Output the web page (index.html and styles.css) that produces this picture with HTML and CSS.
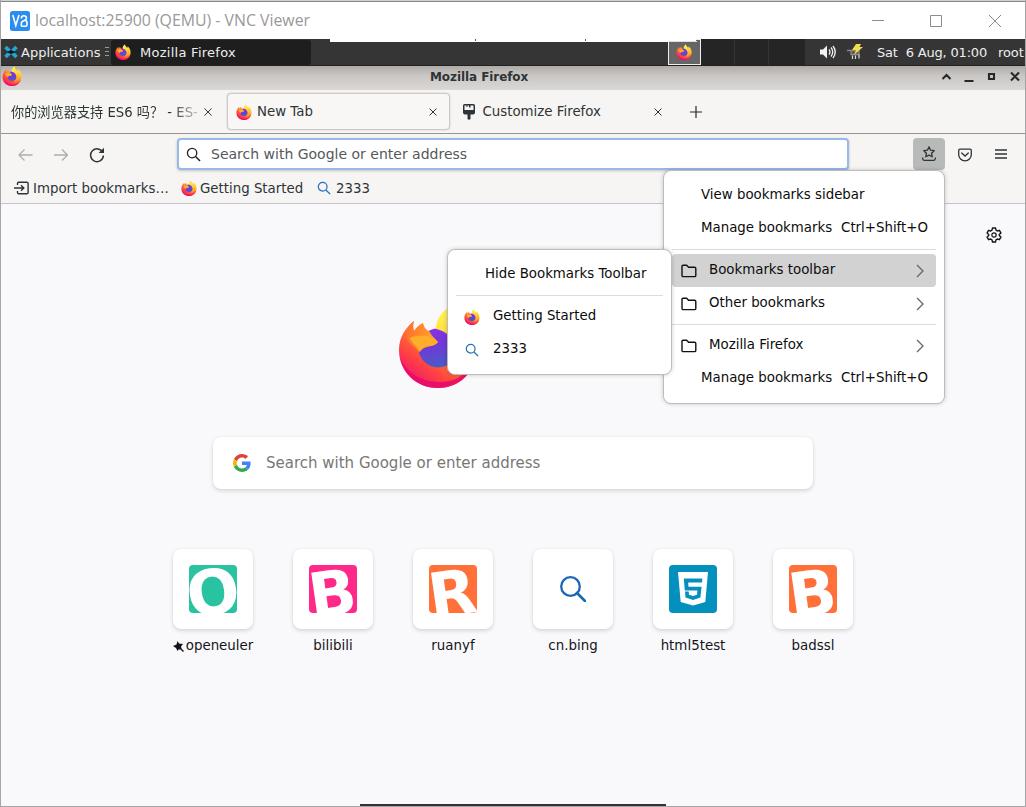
FILE: index.html
```html
<!DOCTYPE html>
<html lang="en">
<head>
<meta charset="utf-8">
<title>VNC Viewer</title>
<link rel="stylesheet" href="styles.css">
</head>
<body>
<svg class="defs" width="0" height="0">
  <defs>
    <linearGradient id="fx-body" x1=".85" y1=".1" x2=".25" y2=".95"><stop offset="0" stop-color="#fff44f"/><stop offset=".3" stop-color="#ffb72e"/><stop offset=".52" stop-color="#ff7a2c"/><stop offset=".8" stop-color="#ff3d46"/><stop offset="1" stop-color="#f01a6a"/></linearGradient>
    <linearGradient id="fx-globe" x1=".3" y1="0" x2=".5" y2="1"><stop offset="0" stop-color="#8a2fe0"/><stop offset=".45" stop-color="#6f3ad8"/><stop offset="1" stop-color="#4a5bc4"/></linearGradient>
    <linearGradient id="fx-head" x1="0" y1=".3" x2="1" y2=".5"><stop offset="0" stop-color="#ff6f2e"/><stop offset="1" stop-color="#ffab2a"/></linearGradient>
    <linearGradient id="fx-flame" x1=".3" y1="0" x2=".6" y2="1"><stop offset="0" stop-color="#fff44f"/><stop offset=".5" stop-color="#ffd43a"/><stop offset="1" stop-color="#ff9a30"/></linearGradient>
  </defs>
  <symbol id="firefox" viewBox="0 0 80 82">
    <path fill="url(#fx-body)" d="M16 15C15 19 15 22 16 25C19 22 22 19 25 17C25 20 26 22 28 25L39 25C39 15 43 7 50 2C50 10 57 15 62 20C64 18 63 13 62 11C72 17 79 30 79 43C79 65 62 82 40 82C18 82 1 66 1 44C1 31 8 21 16 15Z"/>
    <path fill="#e6086c" d="M2 51C9 68 24 76 42 76C60 76 71 66 77 53C73 70 59 82 40 82C21 82 6 69 2 51Z" opacity=".85"/>
    <circle cx="40" cy="42" r="19.500" fill="url(#fx-globe)"/>
    <path fill="url(#fx-flame)" d="M38 23C38 14 43 7 50 2C50 11 59 16 64 24C74 39 69 62 48 65C60 57 62 45 55 35C51 28 46 25 38 23Z"/>
    <path fill="url(#fx-head)" d="M8 27Q11 18 16 15Q14 20 16 25Q20 19 25 17Q26 23 32 26C34 31 38 33 40 36C37 40 33 40 29 41C25 42 22 45 21 46C18 40 8 38 8 27Z"/>
    <path fill="#ffae2c" d="M12 32C18 29 25 30 30 30C33 33 38 34 40 36C37 40 32 39 28 40C25 41 23 43 22 46C20 40 14 38 12 32Z"/>
  </symbol>
  <symbol id="close" viewBox="0 0 8 8"><path d="M.5.5l7 7m0-7l-7 7" fill="none" stroke="#2e3436" stroke-width="1"/></symbol>
  <symbol id="search" viewBox="0 0 16 16"><circle cx="6.500" cy="6.500" r="5" fill="none" stroke="currentColor" stroke-width="1.400"/><path d="M10.200 10.200L15 15" stroke="currentColor" stroke-width="1.600"/></symbol>
  <symbol id="folder" viewBox="0 0 16 14"><path d="M2.200 1.200H5.600L7.600 3.200H13.600Q14.800 3.200 14.800 4.400V11.400Q14.800 12.600 13.600 12.600H2.200Q1 12.600 1 11.400V2.400Q1 1.200 2.200 1.200Z" fill="none" stroke="#111" stroke-width="1.400"/></symbol>
  <symbol id="chevron" viewBox="0 0 8 14"><path d="M1 1l6 6-6 6" fill="none" stroke="#666" stroke-width="1.300"/></symbol>
</svg>

<div class="screen">
  <div class="behind"></div>
  <div class="vnc-title">
    <svg class="vnc-logo" viewBox="0 0 20 20"><rect width="20" height="20" rx="2.500" fill="#2a8df2"/><path d="M2.800 4l3 10.500L9 4M11.300 7.500q0-2.800 2.500-2.800t2.700 2.300q0 1.700-2.200 2.600-3 .8-3 3v1.600q0 1 .8 1h3.600q1.300 0 1.300-1.500v-2.200q0-1.800-1.700-1.800" fill="none" stroke="#fff" stroke-width="1.600"/></svg>
    <span class="vnc-name">localhost:25900 (QEMU) - VNC Viewer</span>
    <svg class="vnc-buttons" viewBox="0 0 132 14"><path d="M0 6.500h12M58.500 1.500h11v11h-11zM117 1l12 12m0-12l-12 12" fill="none" stroke="#8c8c8c" stroke-width="1"/></svg>
  </div>

  <div class="panel">
    <svg class="xfce" viewBox="0 0 14 14"><path d="M1.500 2l4 4M12.500 2l-4 4M1.500 12l4-4M12.500 12l-4-4" stroke="#1fa9d6" stroke-width="3.600"/><path d="M2.500 7q4.500-3 9 0q-4.500 3-9 0z" fill="#07161d"/></svg>
    <span class="apps">Applications</span>
    <svg class="grip" viewBox="0 0 4 10"><path d="M0 .5h4M0 4.500h4M0 8.500h4" stroke="#999"/></svg>
    <div class="task"><svg class="i16"><use href="#firefox"/></svg><span>Mozilla Firefox</span></div>
    <div class="pager"><div class="desk active"><svg class="i16"><use href="#firefox"/></svg></div><div class="desk"></div><div class="desk"></div><div class="desk"></div></div>
    <svg class="volume" viewBox="0 0 16 14"><path d="M0 4.500h3L7 .5v13L3 9.500H0z" fill="#f2f2f2"/><path d="M9 4.500q2 2.500 0 5M11 2.500q3.500 4.500 0 9M13 1q4.500 6 0 12" fill="none" stroke="#f2f2f2" stroke-width="1.300"/></svg>
    <svg class="power" viewBox="0 0 16 16"><path d="M0 6.500h12v4H4V7" fill="#555" stroke="#8b8b8b" stroke-width="1.300"/><path d="M5.500 11.500v3.500M8.500 11.500v3.500M12 10.500v4" stroke="#ddd" stroke-width="1.200"/><path d="M9 0H14l-1.500 3h3.500L7 11l2-5H5z" fill="#f4dd4d"/></svg>
    <span class="clock">Sat&nbsp; 6 Aug, 01:00</span><span class="user">root</span>
    <div class="flyout"><i></i><i></i><i></i></div>
  </div>

  <div class="fx-title"><svg class="i20"><use href="#firefox"/></svg><b>Mozilla Firefox</b>
    <svg class="wm" viewBox="0 0 80 12"><path d="M1.500 8l4-4 4 4M23.500 10h9M48 3h5v5h-5zM70 1.500l8 8m0-8l-8 8" fill="none" stroke="#26292a" stroke-width="2.100"/></svg>
  </div>

  <div class="tabs">
    <div class="tab first"><span class="fade"><span class="cjk">你的浏览器支持</span> ES6 <span class="cjk">吗？</span> - ES-</span><svg class="x"><use href="#close"/></svg></div>
    <div class="tab current"><svg class="i16"><use href="#firefox"/></svg><span>New Tab</span><svg class="x"><use href="#close"/></svg></div>
    <div class="tab custom"><svg class="brush" viewBox="0 0 12 16"><path d="M0 1.500Q0 0 1.500 0h9Q12 0 12 1.500V8.500Q12 10.500 10 10.500H7.500V15q-1.500 1.500-3 0v-4.500H2Q0 10.500 0 8.500z" fill="#2e3436"/><path d="M1.500 1.500h2v1.500h1v-1.500h1.500v2h1.500v-2h3V6h-9z" fill="#f6f5f4"/></svg><span>Customize Firefox</span><svg class="x"><use href="#close"/></svg></div>
    <svg class="plus" viewBox="0 0 12 12"><path d="M6 0v12M0 6h12" stroke="#26292a" stroke-width="1.200"/></svg>
  </div>

  <div class="nav">
    <svg class="arrows" viewBox="0 0 50 12"><path d="M14.500 6H1M6.500.5L1 6l5.500 5.500M36 6H49.500M44 .5L49.500 6l-5.500 5.500" fill="none" stroke="#acafaf" stroke-width="1.300"/></svg>
    <svg class="reload" viewBox="0 0 16 16"><path d="M13.800 5.500A6.400 6.400 0 1 0 14.400 8.500" fill="none" stroke="#2e3436" stroke-width="1.500"/><path d="M15 .8V6H9.600z" fill="#2e3436"/></svg>
    <div class="urlbar"><svg class="mag"><use href="#search"/></svg><span>Search with Google or enter address</span></div>
    <div class="bm-button"><svg viewBox="0 0 14 16"><path d="M7 .9l1.600 3.300 3.600.5-2.600 2.500.6 3.600L7 9.100l-3.200 1.700.6-3.600L1.800 4.700l3.600-.5z" fill="none" stroke="#2e3436" stroke-width="1.300" stroke-linejoin="round"/><path d="M.7 11.500v1.300q0 1.500 1.500 1.500h9.600q1.500 0 1.500-1.500v-1.300" fill="none" stroke="#2e3436" stroke-width="1.300"/></svg></div>
    <svg class="pocket" viewBox="0 0 14 14"><path d="M2 1.200h10q1.300 0 1.300 1.300V6.500a6.300 6.300 0 0 1-12.600 0V2.500Q.7 1.200 2 1.200z" fill="none" stroke="#2e3436" stroke-width="1.300"/><path d="M3.700 5l3.300 3 3.300-3" fill="none" stroke="#2e3436" stroke-width="1.300" stroke-linecap="round"/></svg>
    <svg class="burger" viewBox="0 0 12 10"><path d="M0 1h12M0 5h12M0 9h12" stroke="#2e3436" stroke-width="1.300"/></svg>
  </div>

  <div class="bookmarks">
    <svg class="import" viewBox="0 0 15 14"><path d="M3.500 4V2.500Q3.500 1.200 4.800 1.200h8Q14.100 1.200 14.100 2.500v9q0 1.300-1.300 1.300h-8Q3.500 12.800 3.500 11.500V10M0 7h9.500M7 4.300L9.800 7 7 9.700" fill="none" stroke="#2e3436" stroke-width="1.400"/></svg><span class="bm-import">Import bookmarks…</span>
    <svg class="i16"><use href="#firefox"/></svg><span class="bm-start">Getting Started</span>
    <svg class="bm-mag"><use href="#search"/></svg><span class="bm-num">2333</span>
  </div>

  <div class="content">
    <svg class="gear" viewBox="0 0 16 16"><path d="M6.500 1h3l.5 2.200 1.300.8 2.100-.7 1.500 2.600-1.600 1.500v1.200l1.600 1.500-1.500 2.600-2.100-.7-1.300.8-.5 2.200h-3L6 12.800 4.700 12l-2.100.7-1.500-2.600 1.600-1.500V7.400L1.100 5.900l1.500-2.600 2.100.7L6 3.200z" fill="none" stroke="#15141a" stroke-width="1.400" stroke-linejoin="round"/><circle cx="8" cy="8" r="2.200" fill="none" stroke="#15141a" stroke-width="1.200"/></svg>
    <svg class="biglogo"><use href="#firefox"/></svg>
    <div class="bigsearch"><svg class="google" viewBox="0 0 48 48"><path fill="#db4437" d="M24 9.500c3.540 0 6.710 1.220 9.210 3.600l6.850-6.850C35.900 2.380 30.470 0 24 0 14.620 0 6.510 5.380 2.560 13.220l7.980 6.190C12.430 13.720 17.740 9.500 24 9.500z"/><path fill="#4285f4" d="M46.980 24.550c0-1.570-.15-3.090-.38-4.550H24v9.020h12.940c-.58 2.960-2.260 5.480-4.780 7.180l7.730 6c4.510-4.180 7.090-10.360 7.090-17.650z"/><path fill="#f4b400" d="M10.530 28.590c-.48-1.450-.76-2.990-.76-4.590s.27-3.140.76-4.590l-7.980-6.190C.92 16.460 0 20.120 0 24c0 3.880.92 7.540 2.560 10.780z"/><path fill="#34a853" d="M24 48c6.480 0 11.930-2.130 15.890-5.810l-7.730-6c-2.150 1.450-4.920 2.300-8.160 2.300-6.260 0-11.570-4.220-13.470-9.910l-7.980 6.190C6.510 42.620 14.620 48 24 48z"/></svg><span>Search with Google or enter address</span></div>
    <div class="sites">
      <div class="site"><div class="tile"><svg class="letter teal" viewBox="0 0 48 48"><text x="24" y="49" transform="rotate(-8 24 26)">O</text></svg></div><div class="label"><svg class="pin" viewBox="0 0 11 11"><path d="M4.500 0L6 2.500 10 3 8 5.500l.5 2L11 10l-1 1-2.500-2.500-2 0L4.500 10 3 7 0 5l3.500-1.500z" fill="#15141a"/></svg><span>openeuler</span></div></div>
      <div class="site"><div class="tile"><svg class="letter pink" viewBox="0 0 48 48"><text x="23" y="50" transform="rotate(-8 24 26)">B</text></svg></div><div class="label"><span>bilibili</span></div></div>
      <div class="site"><div class="tile"><svg class="letter orange" viewBox="0 0 48 48"><text x="23" y="50" transform="rotate(-8 24 26)">R</text></svg></div><div class="label"><span>ruanyf</span></div></div>
      <div class="site"><div class="tile"><svg class="bing" viewBox="0 0 26 26"><circle cx="10.500" cy="10.500" r="9.300" fill="none" stroke="#1a68b3" stroke-width="2.300"/><path d="M17 17l8 8" stroke="#1a68b3" stroke-width="2.600" stroke-linecap="round"/></svg></div><div class="label"><span>cn.bing</span></div></div>
      <div class="site"><div class="tile"><svg class="html5" viewBox="0 0 48 48"><rect width="48" height="48" rx="4" fill="#0390be"/><path fill="#fff" d="M9 7h30l-2.700 30L24 40.500 11.700 37z"/><path fill="#0390be" d="M14.800 13.500h18.600l-.4 4H19.200l.3 4.300h13.100l-1.200 10.800L24 35l-7.500-2.400-.5-6h3.700l.3 3.100 4 1.300 4-1.300.4-4.200H15.800z"/></svg></div><div class="label"><span>html5test</span></div></div>
      <div class="site"><div class="tile"><svg class="letter orange" viewBox="0 0 48 48"><text x="23" y="50" transform="rotate(-8 24 26)">B</text></svg></div><div class="label"><span>badssl</span></div></div>
    </div>
    <div class="bottom-bar"></div>
  </div>

  <div class="menu main-menu">
    <div class="item text"><span>View bookmarks sidebar</span></div>
    <div class="item text"><span>Manage bookmarks</span><span class="key">Ctrl+Shift+O</span></div>
    <hr>
    <div class="item selected"><svg class="folder"><use href="#folder"/></svg><span>Bookmarks toolbar</span><svg class="chev"><use href="#chevron"/></svg></div>
    <div class="item"><svg class="folder"><use href="#folder"/></svg><span>Other bookmarks</span><svg class="chev"><use href="#chevron"/></svg></div>
    <hr>
    <div class="item"><svg class="folder"><use href="#folder"/></svg><span>Mozilla Firefox</span><svg class="chev"><use href="#chevron"/></svg></div>
    <div class="item text"><span>Manage bookmarks</span><span class="key">Ctrl+Shift+O</span></div>
  </div>
  <div class="menu sub-menu">
    <div class="item text"><span>Hide Bookmarks Toolbar</span></div>
    <hr>
    <div class="item"><svg class="i16"><use href="#firefox"/></svg><span>Getting Started</span></div>
    <div class="item"><svg class="sub-mag"><use href="#search"/></svg><span>2333</span></div>
  </div>
</div>
</body>
</html>
```
FILE: styles.css
```css
* { box-sizing: border-box; }
body { margin: 0; font-family: "DejaVu Sans", "Noto Sans CJK SC", sans-serif; font-size: 13.33px; color: #2e3436; }
svg { display: block; flex: none; }
.defs { position: absolute; }
span, b { white-space: nowrap; }
.i16 { width: 16px; height: 16px; }
.i20 { width: 20px; height: 20px; margin-left: 1px; }
.screen { position: relative; width: 1026px; height: 807px; overflow: hidden; display: flex; flex-direction: column; border: solid #a5a5a8; border-width: 0 1px 1px; background: #fff; }
.screen::after { content: ""; position: absolute; right: -1px; top: 304px; width: 1px; height: 502px; background: repeating-linear-gradient(#333 0 1px, transparent 1px 24px); }
.behind { height: 2px; flex: none; background: linear-gradient(#d0d0d0 50%, #888 50%); }

.vnc-title { height: 37px; flex: none; display: flex; align-items: center; padding: 0 23px 0 9px; }
.vnc-logo { width: 20px; height: 20px; }
.vnc-name { margin: -1px 0 0 5px; font: 15.85px "Open Sans", sans-serif; color: #999; }
.vnc-buttons { width: 132px; height: 14px; margin-left: auto; margin-right: -2px; }

.panel { position: relative; height: 27px; flex: none; display: flex; align-items: center; background: #353535; border-bottom: 1px solid #222; color: #eee; font-size: 13px; overflow: hidden; }
.xfce { width: 14px; height: 14px; margin-left: 3px; }
.apps { width: 80px; margin-left: 3px; }
.grip { width: 4px; height: 10px; margin: 0 0 0 4px; }
.task { width: 200px; height: 25px; margin-left: 2px; background: #1e1e1e; border-radius: 3px; display: flex; align-items: center; gap: 9px; padding-left: 4px; letter-spacing: .27px; }
.pager { display: flex; margin-left: 357px; height: 26px; background: #252525; }
.desk { width: 34px; border-right: 1px solid #353535; }
.desk:last-child { width: 37px; }
.desk.active { width: 33px; border: 1px solid #eee; background: #666; display: flex; align-items: center; justify-content: center; padding-right: 1px; }
.volume { width: 16px; height: 14px; margin-left: 14px; }
.power { width: 16px; height: 16px; margin-left: 11px; }
.clock { width: 110px; margin-left: 14px; letter-spacing: -.18px; }
.user { margin-left: 11px; letter-spacing: -.1px; }
.flyout { position: absolute; left: 329px; top: 0; width: 366px; height: 3px; background: #fff; }
.flyout i { position: absolute; top: 0; left: 145px; width: 1px; height: 2px; background: #555; }
.flyout i:nth-child(2) { left: 255px; }
.flyout i:nth-child(3) { left: 339px; top: 2px; width: 28px; height: 1px; background: #ddd; }

.fx-title { height: 24px; flex: none; display: flex; align-items: flex-start; background: linear-gradient(#aeaba8, #c9c6c3 40%, #dad7d4); font-size: 12px; }
.fx-title b { margin: 3.500px auto 0 408px; letter-spacing: -.08px; }
.wm { width: 80px; height: 12px; margin: 5px 4px 0 0; }

.tabs { height: 44px; flex: none; display: flex; align-items: center; background: #f6f5f4; border-bottom: 1px solid #979593; font-size: 13.35px; }
.tab { height: 37px; display: flex; align-items: center; }
.tab .x { width: 8px; height: 8px; margin-left: auto; }
.first { width: 226px; padding: 0 15px 0 10px; }
.fade { width: 189px; font-size: 13.2px; -webkit-mask-image: linear-gradient(90deg, #000 160px, transparent 195px); mask-image: linear-gradient(90deg, #000 160px, transparent 195px); }
.cjk { font-family: "Noto Sans CJK SC", sans-serif; }
.current { width: 223px; padding: 0 12px 0 8px; gap: 5px; background: #f8f7f6; border: 1px solid #ccc9c6; border-radius: 4px; box-shadow: 0 0 2px #0003; }
.custom { width: 224px; padding: 0 12px 0 13px; gap: 7.500px; }
.brush { width: 12px; height: 16px; }
.plus { width: 12px; height: 12px; margin-left: 16px; }

.nav { height: 39px; flex: none; display: flex; align-items: center; background: #f6f5f4; font-size: 14px; }
.arrows { width: 50px; height: 12px; margin: 3px 0 0 17px; }
.reload { width: 16px; height: 16px; margin: 3px 0 0 21px; }
.urlbar { width: 672px; height: 32px; margin: 1px 0 0 72px; display: flex; align-items: center; background: #fff; border: 2px solid #98b8e6; border-radius: 4px; box-shadow: 0 1px 3px #0003; padding-left: 7px; color: #55595b; }
.mag { width: 15px; height: 15px; margin-right: 10px; color: #222; }
.bm-button { width: 32px; height: 32px; margin: 1px 0 0 64px; background: #b7bab9; border-radius: 4px; display: flex; align-items: center; justify-content: center; }
.bm-button svg { width: 14px; height: 16px; }
.pocket { width: 14px; height: 14px; margin: 2px 0 0 13px; }
.burger { width: 12px; height: 10px; margin: 1px 0 0 23px; }

.bookmarks { height: 31px; flex: none; display: flex; align-items: center; background: #f6f5f4; border-bottom: 1px solid #c7c5c3; font-size: 13.35px; padding-left: 13px; }
.import { width: 15px; height: 14px; margin-right: 4px; }
.bm-import { width: 148px; }
.bm-start { width: 117px; margin-left: 3px; }
.bm-mag { width: 14px; height: 14px; margin-right: 5px; color: #2672b8; }

.content { position: relative; flex: 1; background: #f9f9fb; display: flex; flex-direction: column; }
.gear { width: 16px; height: 16px; margin: 23px 23px 0 auto; }
.biglogo { width: 80px; height: 82px; margin: 63px 0 0 397px; }
.bigsearch { width: 600px; height: 52px; margin: 49px 0 0 212px; background: #fff; border-radius: 8px; box-shadow: 0 2px 4px #0002, 0 0 2px #0001; display: flex; align-items: center; padding-left: 20px; font-size: 15px; color: #777; }
.google { width: 18px; height: 18px; margin-right: 15px; }
.sites { display: flex; gap: 40px; margin: 60px 0 0 172px; }
.site { width: 80px; }
.tile { width: 80px; height: 80px; border-radius: 8px; background: #fff; box-shadow: 0 2px 4px #0002, 0 0 2px #0001; display: flex; align-items: center; justify-content: center; }
.letter { width: 48px; height: 48px; border-radius: 4px; overflow: hidden; font: bold 62px "DejaVu Sans", sans-serif; fill: #fff; text-anchor: middle; }
.teal { background: #2ac3a2; }
.pink { background: #ff298a; }
.orange { background: #ff7139; }
.bing { width: 26px; height: 26px; }
.html5 { width: 48px; height: 48px; }
.label { display: flex; justify-content: center; align-items: center; gap: 2px; height: 18px; margin-top: 7px; font-size: 13.4px; color: #15141a; }
.pin { width: 11px; height: 11px; margin-top: 3px; }
.bottom-bar { position: absolute; left: 359px; bottom: 0; width: 306px; height: 2px; background: #333; }

.menu { position: absolute; background: #fff; border: 1px solid #bfbdbb; border-radius: 8px; box-shadow: 0 0 4px #0003; color: #0c0c0d; font-size: 13.35px; padding: 8px; }
.main-menu { left: 662px; top: 170px; width: 282px; height: 234px; }
.sub-menu { left: 446px; top: 249px; width: 225px; height: 126px; }
.item { height: 33px; display: flex; align-items: center; padding: 0 12px 0 9px; border-radius: 4px; }
.item span { line-height: 16px; padding-bottom: 1px; }
.item.text { padding: 0 8px 0 29px; }
.key { margin-left: auto; }
.selected { background: #d2d2d2; }
.menu hr { height: 1px; border: 0; background: #dcdcdc; margin: 4px 0; }
.folder { width: 16px; height: 14px; margin-right: 12px; }
.chev { width: 8px; height: 14px; margin-left: auto; }
.sub-menu .i16 { margin-right: 13px; margin-left: -1px; }
.sub-mag { width: 14px; height: 14px; margin-right: 14px; color: #2672b8; }
```
